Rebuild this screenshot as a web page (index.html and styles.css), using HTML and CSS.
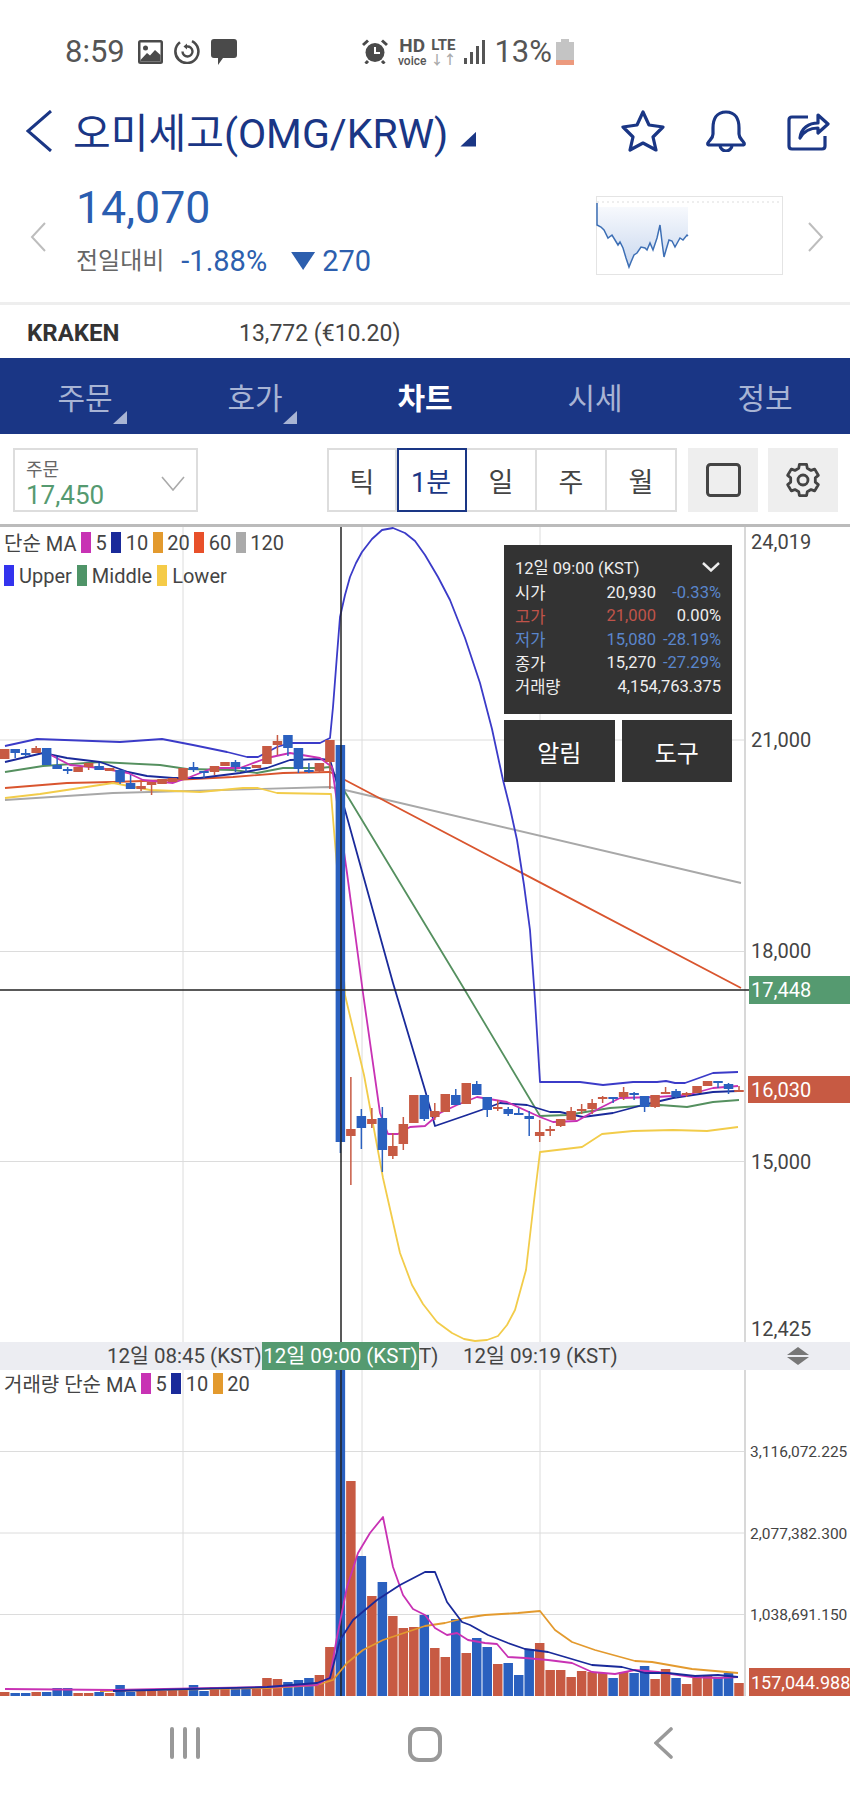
FILE: index.html
```html
<!DOCTYPE html>
<html lang="ko">
<head>
  <meta charset="UTF-8" />
  <meta name="viewport" content="width=device-width, initial-scale=1.0"/>
  <title>오미세고(OMG/KRW) 차트</title>
  <link rel="stylesheet" href="styles.css">
</head>
<body>

  <!-- Status bar -->
  <div class="status">
    <div class="status-group">
      <span class="status-time clock">8:59</span>
      <svg class="st-image" width="25" height="24" viewBox="0 0 25 24">
        <rect width="25" height="24" rx="2.5" fill="#4a4a4a"/>
        <rect x="2.5" y="2.5" width="20" height="19" fill="#fff"/>
        <circle cx="7.5" cy="8" r="2.5" fill="#4a4a4a"/>
        <path d="M2.5 20 L9 13 L12 15.5 L17 10 L22.5 15 V21.5 H2.5 Z" fill="#4a4a4a"/>
      </svg>
      <svg class="st-ring" width="26" height="25" viewBox="0 0 26 25" fill="none" stroke="#4a4a4a">
        <path d="M18 2.2 A11.5 11.5 0 1 1 6 3.3" stroke-width="2.6"/>
        <path d="M8.5 12.5 A5 5 0 1 0 13 7.5" stroke-width="2.4"/>
        <path d="M13 4.5 L9.5 7.5 L13 10.5 Z" fill="#4a4a4a" stroke="none"/>
      </svg>
      <svg class="st-chat" width="26" height="26" viewBox="0 0 26 26">
        <path d="M3 0 H23 Q26 0 26 3 V16 Q26 19 23 19 H12 L7 26 V19 H3 Q0 19 0 16 V3 Q0 0 3 0 Z" fill="#4a4a4a"/>
      </svg>
    </div>
    <div class="status-group status-right">
      <svg width="26" height="25" viewBox="0 0 26 25">
        <circle cx="13" cy="13.5" r="9.5" fill="#4a4a4a"/>
        <path d="M13 8 V14 H18" fill="none" stroke="#fff" stroke-width="2"/>
        <path d="M1 6 L6 1.5 M25 6 L20 1.5 M6 22 L3.5 24.5 M20 22 L22.5 24.5" stroke="#4a4a4a" stroke-width="3" fill="none"/>
      </svg>
      <div class="st-hd"><b>HD</b><span>voice</span></div>
      <div class="st-lte"><b>LTE</b><span>↓↑</span></div>
      <svg width="22" height="24" viewBox="0 0 22 24" fill="#555">
        <rect x="0" y="18" width="3" height="6"/>
        <rect x="6" y="12" width="3" height="12"/>
        <rect x="12" y="6" width="3" height="18"/>
        <rect x="18" y="0" width="3" height="24"/>
      </svg>
      <span class="status-time battery-level">13%</span>
      <svg class="st-battery" width="18" height="26" viewBox="0 0 18 26">
        <rect x="5" y="0" width="8" height="3" fill="#c4c4c4"/>
        <rect x="0" y="3" width="18" height="18" fill="#c4c4c4"/>
        <rect x="0" y="21" width="18" height="5" fill="#ec9a7e"/>
      </svg>
    </div>
  </div>

  <!-- Title -->
  <header class="title-bar">
    <svg class="back" width="26" height="42" viewBox="0 0 26 42" fill="none" stroke="#1a3685" stroke-width="3">
      <path d="M25 1 L2 21 L25 41"/>
    </svg>
    <h1>오미세고(OMG/KRW)</h1>
    <span class="title-arrow"></span>
    <div class="title-actions">
      <svg width="44" height="42" viewBox="0 0 44 42" fill="none" stroke="#1a3685" stroke-width="3.2" stroke-linejoin="round">
        <path d="M22 2 L28 15 L42 17 L32 27 L35 40 L22 33 L9 40 L12 27 L2 17 L16 15 Z"/>
      </svg>
      <svg width="40" height="42" viewBox="0 0 40 42" fill="none" stroke="#1a3685" stroke-width="3.2" stroke-linejoin="round">
        <path d="M20 2 C10 2 7 10 7 18 V24 C7 29 3 30 2 33 Q1 35 4 35 H36 Q39 35 38 33 C37 30 33 29 33 24 V18 C33 10 30 2 20 2 Z"/>
        <path d="M14 35 A6 6 0 0 0 26 35"/>
      </svg>
      <svg width="43" height="40" viewBox="0 0 43 40" fill="none" stroke="#1a3685" stroke-width="3.2" stroke-linejoin="round">
        <path d="M21 6 H5 Q2 6 2 9 V35 Q2 38 5 38 H35 Q38 38 38 35 V25"/>
        <path d="M13 27 C14 17 22 12 31 12 V4 L41 13 L31 22 V17 C23 17 17 20 13 27 Z"/>
      </svg>
    </div>
  </header>

  <!-- Price summary -->
  <section class="price">
    <svg class="price-chevron" width="16" height="30" viewBox="0 0 16 30" fill="none" stroke="#bdbdbd" stroke-width="2">
      <path d="M15 1 L2 15 L15 29"/>
    </svg>
    <div class="price-info">
      <div class="price-now">14,070</div>
      <div class="price-change">
        <span class="change-label">전일대비</span>
        <span class="change-pct">-1.88%</span>
        <span class="change-tri"></span>
        <span>270</span>
      </div>
    </div>
    <svg class="spark" width="187" height="79" viewBox="596 196 187 79">
      <defs>
        <linearGradient id="sparkFill" x1="0" y1="0" x2="0" y2="1">
          <stop offset="0" stop-color="#f7f9fd"/>
          <stop offset="1" stop-color="#c9d8ef"/>
        </linearGradient>
      </defs>
      <rect x="596.5" y="196.5" width="186" height="78" fill="#fff" stroke="#e4e4e4"/>
      <line x1="597" y1="202" x2="782" y2="202" stroke="#ddd" stroke-dasharray="2 3"/>
      <path d="M597 207 H688 V236 L687 235 L683 240 L680 238 L675 247 L672 241 L669 240 L666 250 L664 257 L662 242 L660 225 L657 238 L653 250 L650 243 L647 250 L645 248 L641 247 L637 253 L634 255 L631 262 L629 267 L626 258 L623 248 L620 242 L618 245 L615 240 L612 235 L608 238 L604 230 L601 227 L597 225 Z" fill="url(#sparkFill)"/>
      <path d="M597 203 L597 225 L601 227 L604 230 L608 238 L612 235 L615 240 L618 245 L620 242 L623 248 L626 258 L629 267 L631 262 L634 255 L637 253 L641 247 L645 248 L647 250 L650 243 L653 250 L657 238 L660 225 L662 242 L664 257 L666 250 L669 240 L672 241 L675 247 L680 238 L683 240 L687 235 L688 236" fill="none" stroke="#3d6fb5" stroke-width="1.5"/>
    </svg>
    <svg class="price-chevron-next" width="16" height="30" viewBox="0 0 16 30" fill="none" stroke="#bdbdbd" stroke-width="2">
      <path d="M1 1 L14 15 L1 29"/>
    </svg>
  </section>

  <div class="exchange">
    <b>KRAKEN</b>
    <span>13,772 (€10.20)</span>
  </div>

  <!-- Tabs -->
  <nav class="tabs">
    <div class="tab has-menu">주문</div>
    <div class="tab has-menu">호가</div>
    <div class="tab active">차트</div>
    <div class="tab">시세</div>
    <div class="tab">정보</div>
  </nav>

  <!-- Chart controls -->
  <div class="toolbar">
    <div class="order-select">
      <div>
        <div class="order-label">주문</div>
        <div class="order-value">17,450</div>
      </div>
      <svg width="24" height="15" viewBox="0 0 24 15" fill="none" stroke="#aaa" stroke-width="1.6">
        <path d="M1 1 L12 14 L23 1"/>
      </svg>
    </div>
    <div class="periods">
      <div class="period">틱</div>
      <div class="period active">1분</div>
      <div class="period">일</div>
      <div class="period">주</div>
      <div class="period">월</div>
    </div>
    <div class="tool-btn">
      <svg width="35" height="34" viewBox="0 0 35 34" fill="none" stroke="#444" stroke-width="3">
        <rect x="1.5" y="1.5" width="32" height="31" rx="3"/>
      </svg>
    </div>
    <div class="tool-btn">
      <svg width="34" height="34" viewBox="0 0 34 34" fill="none" stroke="#444" stroke-width="2.8" stroke-linejoin="round">
        <path d="M12.72 5.25 L13.4 1.41 L20.6 1.41 L21.28 5.25 L25.03 7.42 L28.7 6.09 L32.3 12.32 L29.31 14.83 L29.31 19.17 L32.3 21.68 L28.7 27.91 L25.03 26.58 L21.28 28.75 L20.6 32.59 L13.4 32.59 L12.72 28.75 L8.97 26.58 L5.3 27.91 L1.7 21.68 L4.69 19.17 L4.69 14.83 L1.7 12.32 L5.3 6.09 L8.97 7.42 Z"/>
        <circle cx="17" cy="17" r="5"/>
      </svg>
    </div>
  </div>

  <!-- Candle chart -->
  <section class="price-pane">
    <svg class="pane-svg" width="850" height="815" viewBox="0 527 850 815">
      <g class="grid">
        <line x1="183" y1="527" x2="183" y2="1342"/>
        <line x1="362" y1="527" x2="362" y2="1342"/>
        <line x1="540" y1="527" x2="540" y2="1342"/>
        <line x1="0" y1="740" x2="745" y2="740"/>
        <line x1="0" y1="951.5" x2="745" y2="951.5"/>
        <line x1="0" y1="1161.5" x2="745" y2="1161.5"/>
      </g>
      <line class="axis-line" x1="745" y1="527" x2="745" y2="1342"/>
      <g id="priceLines"></g>
      <g id="candles"></g>
      <line class="crosshair" x1="341" y1="527" x2="341" y2="1342"/>
      <line class="crosshair" x1="0" y1="990" x2="749" y2="990"/>
      <text class="axis-label" x="751" y="549">24,019</text>
      <text class="axis-label" x="751" y="747">21,000</text>
      <text class="axis-label" x="751" y="958">18,000</text>
      <text class="axis-label" x="751" y="1169">15,000</text>
      <text class="axis-label" x="751" y="1336">12,425</text>
      <rect x="749" y="976" width="101" height="28" fill="#559a70"/>
      <text class="axis-label tag" x="751" y="997">17,448</text>
      <rect x="748" y="1076" width="102" height="27" fill="#c75a43"/>
      <text class="axis-label tag" x="751" y="1096.5">16,030</text>
    </svg>

    <div class="legend">
      <div class="legend-row">
        <span>단순 MA</span>
        <i class="sw c-ma5"></i><span>5</span>
        <i class="sw c-ma10"></i><span>10</span>
        <i class="sw c-ma20"></i><span>20</span>
        <i class="sw c-ma60"></i><span>60</span>
        <i class="sw c-ma120"></i><span>120</span>
      </div>
      <div class="legend-row second">
        <i class="sw c-upper"></i><span>Upper</span>
        <i class="sw c-middle"></i><span>Middle</span>
        <i class="sw c-lower"></i><span>Lower</span>
      </div>
    </div>

    <div class="quote">
      <div class="quote-box">
        <div class="quote-date">
          <span>12일 09:00 (KST)</span>
          <svg width="18" height="10" viewBox="0 0 18 10" fill="none" stroke="#eee" stroke-width="2.4">
            <path d="M1 1 L9 8.5 L17 1"/>
          </svg>
        </div>
        <div class="quote-row"><span>시가</span><span>20,930</span><span class="down">-0.33%</span></div>
        <div class="quote-row up"><span>고가</span><span>21,000</span><span class="flat">0.00%</span></div>
        <div class="quote-row down"><span>저가</span><span>15,080</span><span>-28.19%</span></div>
        <div class="quote-row"><span>종가</span><span>15,270</span><span class="down">-27.29%</span></div>
        <div class="quote-row volume"><span>거래량</span><span>4,154,763.375</span></div>
      </div>
      <div class="quote-btns">
        <div class="quote-btn">알림</div>
        <div class="quote-btn">도구</div>
      </div>
    </div>
  </section>

  <!-- Time axis -->
  <div class="time-bar">
    <span class="time-label t-left">12일 08:45 (KST)</span>
    <span class="time-label t-right">12일 09:19 (KST)</span>
    <span class="time-label t-mid">T)</span>
    <span class="time-now">12일 09:00 (KST)</span>
    <svg class="time-toggle" width="22" height="18" viewBox="0 0 22 18" fill="#777">
      <path d="M11 0 L22 8 H0 Z M0 10 H22 L11 18 Z"/>
    </svg>
  </div>

  <!-- Volume chart -->
  <section class="volume-pane">
    <svg class="pane-svg" width="850" height="326" viewBox="0 1370 850 326">
      <g class="grid">
        <line x1="183" y1="1370" x2="183" y2="1696"/>
        <line x1="362" y1="1370" x2="362" y2="1696"/>
        <line x1="540" y1="1370" x2="540" y2="1696"/>
        <line x1="0" y1="1451.5" x2="745" y2="1451.5"/>
        <line x1="0" y1="1533" x2="745" y2="1533"/>
        <line x1="0" y1="1614.5" x2="745" y2="1614.5"/>
      </g>
      <line class="axis-line" x1="745" y1="1370" x2="745" y2="1696"/>
      <g id="volumeBars"></g>
      <line class="crosshair" x1="341" y1="1370" x2="341" y2="1696"/>
      <g id="volumeLines"></g>
      <text class="axis-small" x="750" y="1457">3,116,072.225</text>
      <text class="axis-small" x="750" y="1539">2,077,382.300</text>
      <text class="axis-small" x="750" y="1620">1,038,691.150</text>
      <rect x="749" y="1668" width="101" height="28" fill="#c75a43"/>
      <text class="axis-label tag tag-small" x="751" y="1689">157,044.988</text>
    </svg>
    <div class="legend legend-volume">
      <div class="legend-row">
        <span>거래량 단순 MA</span>
        <i class="sw c-ma5"></i><span>5</span>
        <i class="sw c-ma10"></i><span>10</span>
        <i class="sw c-ma20"></i><span>20</span>
      </div>
    </div>
  </section>

  <!-- Android navigation -->
  <footer class="nav-bar">
    <svg width="30" height="32" viewBox="0 0 30 32" stroke="#999" stroke-width="4" stroke-linecap="round">
      <path d="M2 2 V30 M15 2 V30 M28 2 V30"/>
    </svg>
    <svg width="34" height="35" viewBox="0 0 34 35" fill="none" stroke="#999" stroke-width="4">
      <rect x="2" y="2" width="30" height="31" rx="9"/>
    </svg>
    <svg width="19" height="32" viewBox="0 0 19 32" fill="none" stroke="#999" stroke-width="3.6" stroke-linecap="round">
      <path d="M17 2 L2 16 L17 30"/>
    </svg>
  </footer>

  <script src="chart.js"></script>
</body>
</html>
```

FILE: styles.css
```css
* {
  box-sizing: border-box;
  margin: 0;
  padding: 0;
}

body {
  font-family: Roboto, "Noto Sans CJK KR", sans-serif;
  background: #fff;
  color: #444;
  width: 850px;
  overflow: hidden;
}

/* Status bar */
.status {
  height: 90px;
  padding: 13px 276px 0 65px;
  display: flex;
  justify-content: space-between;
  align-items: center;
}

.status-group {
  display: flex;
  align-items: center;
  gap: 11px;
}

.status-right {
  gap: 8px;
}

.status-time {
  font-size: 31px;
  color: #555;
}

.clock {
  margin-right: 2px;
}

.battery-level {
  margin-right: -4px;
}

.st-hd, .st-lte {
  display: flex;
  flex-direction: column;
  align-items: center;
  line-height: 1;
  color: #555;
}

.st-hd {
  margin: 0 -4px 0 2px;
}

.st-hd b {
  font-size: 19px;
}

.st-lte b {
  font-size: 15px;
}

.st-hd span {
  font-size: 12px;
  font-weight: 500;
}

.st-lte span {
  font-size: 13px;
  color: #aaa;
  font-weight: bold;
}

/* Title bar */
.title-bar {
  height: 82px;
  padding: 0 20px 0 26px;
  display: flex;
  align-items: center;
  color: #1a3685;
}

.title-bar h1 {
  font-size: 41px;
  font-weight: 400;
  margin: 0 0 3px 21px;
  white-space: nowrap;
}

.title-arrow {
  width: 16px;
  height: 15px;
  margin: 16px 0 0 12px;
  background: #1a3685;
  clip-path: polygon(100% 0, 100% 100%, 0 100%);
}

.title-actions {
  margin-left: auto;
  display: flex;
  align-items: center;
  gap: 41px;
}

/* Price summary */
.price {
  height: 130px;
  padding: 0 26px 0 30px;
  display: flex;
  align-items: center;
}

.price-info {
  margin-left: 30px;
  padding-bottom: 13px;
}

.price-now {
  font-size: 44.7px;
  line-height: 52px;
  color: #2a5db0;
}

.price-change {
  display: flex;
  align-items: center;
  font-size: 29px;
  line-height: 36px;
  margin-top: 9px;
  color: #2d5fae;
}

.change-label {
  font-size: 24px;
  color: #666;
}

.change-pct {
  margin-left: 17px;
}

.change-tri {
  width: 24px;
  height: 18px;
  margin: 0 7px 0 24px;
  background: #2d5fae;
  clip-path: polygon(0 0, 100% 0, 50% 100%);
}

.spark {
  margin: 0 0 4px auto;
}

.price-chevron-next {
  margin-left: 25px;
}

.exchange {
  height: 56px;
  padding: 3px 0 0 27px;
  border-top: 3px solid #eee;
  display: flex;
  align-items: center;
  font-size: 24px;
  color: #333;
}

.exchange b {
  width: 212px;
  font-weight: 700;
}

.exchange span {
  font-size: 23px;
  color: #444;
}

/* Tabs */
.tabs {
  height: 76px;
  background: #1a3685;
  display: flex;
}

.tab {
  flex: 1;
  position: relative;
  display: flex;
  align-items: center;
  justify-content: center;
  font-size: 30px;
  color: #a8b4d4;
}

.tab.active {
  color: #fff;
  font-weight: bold;
}

.tab.has-menu::after {
  content: "";
  position: absolute;
  left: 113px;
  top: 53px;
  width: 14px;
  height: 13px;
  background: #a8b4d4;
  clip-path: polygon(100% 0, 100% 100%, 0 100%);
}

/* Chart controls */
.toolbar {
  height: 93px;
  padding: 14px 0 0 13px;
  display: flex;
  align-items: flex-start;
}

.order-select {
  width: 185px;
  height: 64px;
  padding: 7px 11px 0 11px;
  border: 2px solid #ddd;
  display: flex;
  justify-content: space-between;
  align-items: center;
  margin-right: 129px;
}

.order-label {
  font-size: 18px;
  line-height: 22px;
  color: #666;
}

.order-value {
  font-size: 26px;
  line-height: 28px;
  color: #559a70;
}

.periods {
  display: flex;
  margin-right: 11px;
}

.period {
  width: 70px;
  height: 64px;
  border: 2px solid #ddd;
  border-left: 0;
  display: flex;
  align-items: center;
  justify-content: center;
  font-size: 27px;
  color: #444;
}

.period:first-child {
  border-left: 2px solid #ddd;
}

.period.active {
  color: #1a3685;
  outline: 2px solid #1a3685;
  outline-offset: -2px;
}

.tool-btn {
  width: 70px;
  height: 64px;
  margin-right: 10px;
  background: #eee;
  display: flex;
  align-items: center;
  justify-content: center;
}

/* Chart panes */
.price-pane {
  position: relative;
  height: 815px;
}

.volume-pane {
  position: relative;
  height: 326px;
}

.pane-svg {
  display: block;
}

.grid line {
  stroke: #dcdcdc;
  stroke-width: 1;
}

.axis-line {
  stroke: #d8d8d8;
  stroke-width: 2;
}

.crosshair {
  stroke: #222;
  stroke-width: 1.5;
}

.axis-label {
  font-size: 20px;
  fill: #444;
}

.axis-small {
  font-size: 15.5px;
  fill: #444;
}

.axis-label.tag {
  fill: #fff;
}

.axis-label.tag-small {
  font-size: 18px;
}

.price-pane::before {
  content: "";
  position: absolute;
  top: -3px;
  left: 0;
  right: 0;
  height: 3px;
  background: #bbb;
}

/* Legends */
.legend {
  position: absolute;
  left: 4px;
  top: -1px;
  font-size: 20px;
  color: #444;
}

.legend-volume {
  top: -3px;
}

.legend-row {
  display: flex;
  align-items: center;
  gap: 4.5px;
  height: 33px;
}

.legend-row.second {
  gap: 5px;
}

.sw {
  width: 10px;
  height: 21px;
  display: block;
}

.c-ma5 { background: #c832b4; }
.c-ma10 { background: #1a2a9a; }
.c-ma20 { background: #e39a2e; }
.c-ma60 { background: #e8502a; }
.c-ma120 { background: #aaa; }
.c-upper { background: #3333ee; }
.c-middle { background: #4f9468; }
.c-lower { background: #f5cb48; }

/* Quote box */
.quote {
  position: absolute;
  left: 504px;
  top: 18px;
  width: 228px;
  color: #eee;
  font-size: 16.5px;
}

.quote-box {
  height: 169px;
  padding: 10px 11px 0 11px;
  background: #333;
}

.quote-date {
  height: 25px;
  display: flex;
  justify-content: space-between;
  align-items: center;
  padding: 0 1px 2px 0;
}

.quote-row {
  height: 23.5px;
  display: grid;
  grid-template-columns: 40px 101px 65px;
  align-items: center;
  text-align: right;
}

.quote-row span:first-child {
  text-align: left;
}

.quote-row.volume {
  grid-template-columns: 60px 146px;
}

.up { color: #c0534a; }
.down { color: #5a86cc; }
.flat { color: #eee; }

.quote-btns {
  margin-top: 6px;
  display: flex;
  gap: 7px;
}

.quote-btn {
  flex: 1;
  height: 62px;
  background: #333;
  color: #fff;
  font-size: 24px;
  display: flex;
  align-items: center;
  justify-content: center;
}

/* Time axis */
.time-bar {
  position: relative;
  height: 28px;
  background: #ecedf2;
  font-size: 20.5px;
  line-height: 29px;
  white-space: nowrap;
}

.time-label {
  position: absolute;
  top: 0;
  color: #444;
}

.t-left { left: 107px; }
.t-mid { left: 419px; }
.t-right { left: 463px; }

.time-now {
  position: absolute;
  left: 262px;
  width: 157px;
  height: 28px;
  top: 0;
  background: #559a70;
  color: #fff;
  text-align: center;
}

.time-toggle {
  position: absolute;
  left: 787px;
  top: 5px;
}

/* Android navigation */
.nav-bar {
  height: 99px;
  display: flex;
  align-items: flex-start;
  padding: 31px 0 0 170px;
}

.nav-bar svg:nth-child(2) {
  margin-left: 208px;
}

.nav-bar svg:nth-child(3) {
  margin-left: 212px;
}
```

FILE: chart.js
```js
// Chart data, read off in page coordinates. Panes use the same coordinates in their viewBox.
const SVG_NS = "http://www.w3.org/2000/svg";
const RED = "#c75a43";
const BLUE = "#2a60bf";
const STEP = 10.49;
const FIRST_X = 4.7;

// [colour, high, bodyTop, bodyBottom, low]
const candles = [
  ["r",749,749,759,759], ["b",749,749,753,758], ["b",749,753,755,757], ["r",746,748,753,753],
  ["b",748,748,765,765], ["b",757,765,769,769], ["b",767,769,771,774], ["r",767,767,772,772],
  ["r",763,763,767,770], ["b",763,766,770,770], ["r",768,768,771,771], ["b",770,770,782,784],
  ["b",775,783,789,789], ["r",782,786,789,791], ["r",782,782,785,795], ["r",779,779,784,784],
  ["r",778,778,782,782], ["r",768,768,780,780], ["b",762,767,770,772], ["b",771,771,772,778],
  ["r",766,766,772,775], ["r",762,762,766,766], ["b",760,762,767,772], ["b",767,767,769,772],
  ["r",765,765,768,768], ["r",746,746,764,764], ["r",735,741,745,755], ["b",735,735,748,756],
  ["b",748,748,769,773], ["b",763,770,772,773], ["r",763,763,771,773], ["r",740,740,762,789],
  ["b",745,745,1142,1153], ["r",1077,1129,1136,1185], ["b",1109,1116,1128,1149], ["r",1108,1119,1124,1128],
  ["b",1107,1118,1150,1172], ["r",1133,1146,1156,1159], ["r",1117,1124,1144,1150], ["r",1095,1095,1123,1123],
  ["b",1095,1095,1119,1121], ["r",1103,1111,1117,1120], ["r",1094,1094,1112,1112], ["b",1089,1095,1105,1105],
  ["r",1083,1083,1104,1104], ["b",1081,1084,1095,1095], ["b",1097,1097,1110,1117], ["r",1100,1107,1109,1111],
  ["b",1107,1109,1114,1116], ["b",1108,1113,1114,1114], ["b",1111,1116,1119,1136], ["r",1120,1132,1136,1142],
  ["r",1126,1129,1131,1136], ["r",1119,1119,1126,1127], ["r",1107,1111,1120,1120], ["r",1104,1109,1111,1114],
  ["r",1099,1103,1109,1114], ["r",1096,1097,1099,1103], ["b",1097,1097,1098,1103], ["r",1087,1092,1097,1100],
  ["b",1092,1093,1094,1100], ["b",1096,1096,1107,1112], ["r",1095,1095,1107,1108], ["r",1087,1092,1093,1093],
  ["b",1089,1091,1097,1098], ["r",1092,1093,1095,1097], ["r",1086,1086,1093,1093], ["r",1081,1081,1086,1086],
  ["b",1081,1081,1082,1088], ["b",1083,1084,1089,1094], ["r",1086,1090,1091,1091]
];

// top of each volume bar; they all end at 1696
const volumes = [
  1692,1693,1693,1692,1692,1688,1688,1693,1693,1692,1693,1685,1692,1689,1689,1691,
  1689,1689,1685,1691,1687,1689,1689,1689,1688,1678,1679,1682,1680,1678,1675,1647,
  1370,1481,1556,1596,1582,1616,1628,1627,1615,1648,1657,1619,1653,1638,1647,1664,
  1663,1675,1649,1643,1670,1670,1677,1671,1672,1673,1678,1672,1673,1666,1679,1669,
  1678,1684,1678,1676,1678,1673,1683
];

const priceLines = [
  { color: "#a8a8a8", pts: "5,800 113,793 330,787 345,790 741,883" },
  { color: "#d9552e", pts: "5,788 67,783 113,782 173,780 233,777 283,773 330,772 345,780 741,988" },
  { color: "#f2cc4a", pts: "5,798 40,794 113,783 150,790 200,792 243,788 258,788 277,793 331,794 337,867 345,995 364,1075 383,1178 400,1253 412,1285 423,1304 437,1322 452,1333 464,1339 475,1341 487,1340 498,1336 507,1325 515,1310 526,1270 534,1201 540,1152 582,1147 602,1134 633,1131 673,1130 707,1131 738,1127" },
  { color: "#55905f", pts: "5,772 43,766 100,762 160,765 187,769 233,770 257,773 283,768 320,768 330,767 345,792 463,987 540,1116 567,1115 610,1108 640,1106 660,1105 687,1107 713,1102 739,1100" },
  { color: "#3b3bc8", pts: "5,746 37,739 120,742 162,739 193,745 227,752 247,757 258,757 277,747 290,743 320,743 330,738 333,707 337,655 340,617 345,595 350,577 356,563 362,552 372,539 382,530 393,528 405,533 415,541 425,555 438,577 450,600 465,638 480,683 492,729 503,780 510,808 517,840 524,885 530,930 535,1000 540,1082 580,1082 603,1085 633,1082 657,1082 666,1081 675,1083 685,1083 713,1073 738,1072" },
  { color: "#1a2a9a", pts: "5,762 43,753 67,758 100,762 128,772 147,776 173,778 200,778 240,773 267,768 290,760 320,759 330,760 345,810 393,983 425,1090 435,1126 467,1115 487,1108 500,1103 527,1105 550,1112 560,1112 583,1117 613,1113 643,1105 673,1098 713,1092 738,1091" },
  { color: "#c832b4", pts: "47,753 70,765 100,768 128,773 143,780 173,783 190,777 213,768 240,768 267,758 290,753 320,758 332,767 347,873 363,993 380,1113 388,1134 398,1134 410,1127 425,1126 440,1113 457,1105 477,1097 507,1102 540,1117 553,1122 577,1121 600,1108 620,1098 657,1097 687,1095 713,1088 738,1086" }
];

const volumeLines = [
  { color: "#e39a2e", pts: "100,1691 267,1688 317,1685 333,1680 347,1663 363,1650 383,1640 425,1626 445,1623 465,1618 485,1615 518,1613 540,1611 555,1630 572,1642 595,1650 635,1661 652,1662 692,1669 738,1673" },
  { color: "#c832b4", pts: "5,1689 113,1690 267,1687 317,1685 330,1677 337,1637 347,1587 358,1553 370,1533 383,1517 393,1567 403,1595 413,1609 425,1615 435,1628 447,1635 457,1633 468,1640 485,1643 497,1644 508,1657 525,1658 548,1660 572,1663 592,1672 615,1674 635,1670 658,1672 692,1677 718,1678 738,1677" },
  { color: "#1a2a9a", pts: "113,1691 267,1687 317,1683 330,1678 340,1640 353,1620 377,1600 400,1585 425,1572 435,1572 447,1602 462,1622 470,1625 488,1635 508,1643 525,1649 548,1652 565,1657 592,1665 622,1667 645,1673 668,1673 695,1676 718,1675 738,1677" }
];

function add(parent, tag, attrs) {
  const el = document.createElementNS(SVG_NS, tag);
  for (const key in attrs) {
    el.setAttribute(key, attrs[key]);
  }
  parent.appendChild(el);
}

function drawLines(parent, lines, width) {
  lines.forEach(function (line) {
    add(parent, "polyline", {
      points: line.pts,
      fill: "none",
      stroke: line.color,
      "stroke-width": width,
      "stroke-linejoin": "round"
    });
  });
}

const candleGroup = document.getElementById("candles");
candles.forEach(function (c, i) {
  const x = FIRST_X + i * STEP;
  const color = c[0] === "r" ? RED : BLUE;
  add(candleGroup, "line", { x1: x, x2: x, y1: c[1], y2: c[4], stroke: color, "stroke-width": 1.5 });
  add(candleGroup, "rect", { x: x - 4.75, y: c[2], width: 9.5, height: Math.max(c[3] - c[2], 2), fill: color });
});

const barGroup = document.getElementById("volumeBars");
volumes.forEach(function (top, i) {
  const x = FIRST_X + i * STEP;
  const color = candles[i][0] === "r" ? RED : BLUE;
  add(barGroup, "rect", { x: x - 4.75, y: top, width: 9.5, height: 1696 - top, fill: color });
});

drawLines(document.getElementById("priceLines"), priceLines, 1.8);
drawLines(document.getElementById("volumeLines"), volumeLines, 1.8);
```
